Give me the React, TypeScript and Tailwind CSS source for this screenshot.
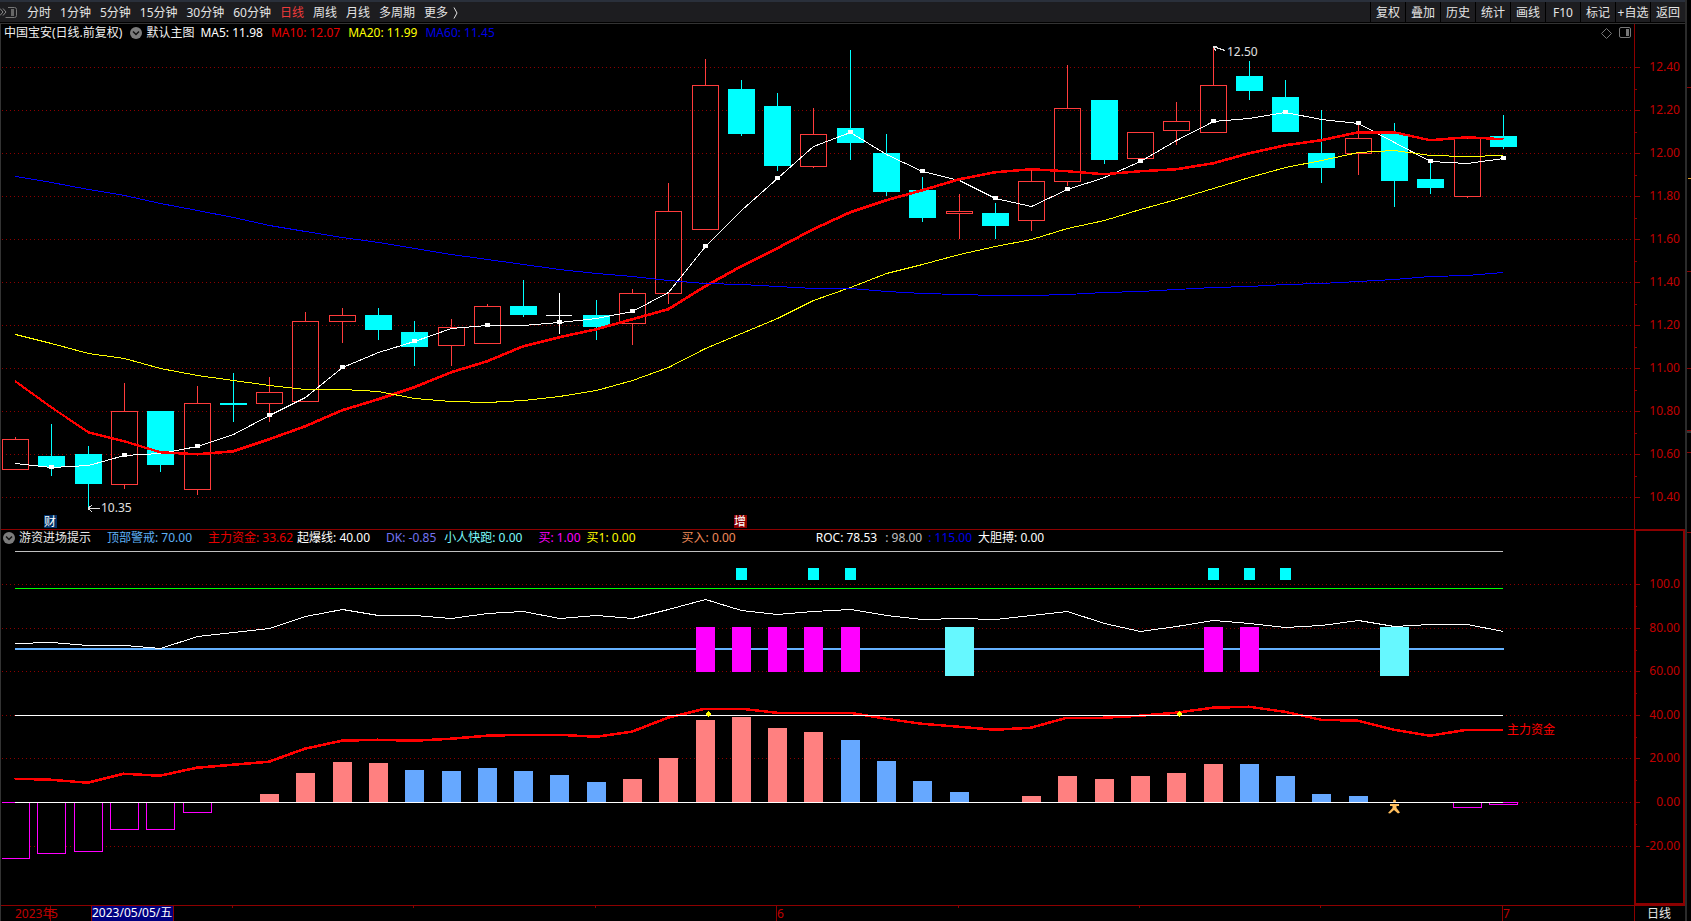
import { ReactNode } from 'react'

type Candle = [open: number, close: number, high: number, low: number]

const candles: Candle[] = [
  [10.53, 10.67, 10.68, 10.53],
  [10.59, 10.54, 10.74, 10.5],
  [10.6, 10.46, 10.64, 10.35],
  [10.46, 10.8, 10.93, 10.44],
  [10.8, 10.55, 10.8, 10.52],
  [10.44, 10.84, 10.92, 10.41],
  [10.84, 10.83, 10.98, 10.75],
  [10.84, 10.89, 10.96, 10.75],
  [10.85, 11.22, 11.26, 10.85],
  [11.22, 11.25, 11.28, 11.12],
  [11.25, 11.18, 11.28, 11.13],
  [11.17, 11.1, 11.22, 11.01],
  [11.11, 11.19, 11.23, 11.01],
  [11.12, 11.29, 11.3, 11.12],
  [11.29, 11.25, 11.41, 11.24],
  [11.25, 11.25, 11.35, 11.16],
  [11.25, 11.19, 11.32, 11.13],
  [11.21, 11.35, 11.37, 11.11],
  [11.35, 11.73, 11.86, 11.3],
  [11.65, 12.32, 12.44, 11.65],
  [12.3, 12.09, 12.34, 12.08],
  [12.22, 11.94, 12.28, 11.92],
  [11.94, 12.09, 12.21, 11.93],
  [12.12, 12.05, 12.48, 11.97],
  [12.0, 11.82, 12.09, 11.8],
  [11.83, 11.7, 11.89, 11.68],
  [11.72, 11.73, 11.81, 11.6],
  [11.72, 11.66, 11.77, 11.6],
  [11.69, 11.87, 11.93, 11.64],
  [11.87, 12.21, 12.41, 11.85],
  [12.25, 11.97, 12.25, 11.95],
  [11.98, 12.1, 12.1, 11.97],
  [12.11, 12.15, 12.24, 12.04],
  [12.1, 12.32, 12.5, 12.1],
  [12.36, 12.29, 12.43, 12.25],
  [12.26, 12.1, 12.34, 12.1],
  [12.0, 11.93, 12.2, 11.86],
  [12.0, 12.07, 12.13, 11.9],
  [12.09, 11.87, 12.14, 11.75],
  [11.88, 11.84, 11.96, 11.81],
  [11.8, 12.07, 12.08, 11.79],
  [12.08, 12.03, 12.18, 12.02],
]

// the first n-1 values come from bars that are off screen
const ma = (n: number, lead: number[]) =>
  candles.map((_, i) => {
    if (i < n - 1) return lead[i]
    return candles.slice(i - n + 1, i + 1).reduce((sum, c) => sum + c[1], 0) / n
  })

const ma5 = ma(5, [10.56, 10.54, 10.55, 10.595])
const ma10 = ma(10, [10.94, 10.82, 10.705, 10.66, 10.61, 10.6, 10.617, 10.67, 10.73])
const ma20 = ma(
  20,
  [
    11.16, 11.12, 11.07, 11.047, 11.003, 10.97, 10.944, 10.921, 10.906, 10.906, 10.895, 10.863, 10.847, 10.845, 10.854,
    10.873, 10.898, 10.947, 11.005,
  ],
)
const ma60 = [
  11.896, 11.865, 11.833, 11.805, 11.767, 11.735, 11.702, 11.665, 11.637, 11.609, 11.586, 11.561, 11.533, 11.51, 11.487,
  11.464, 11.442, 11.427, 11.409, 11.399, 11.393, 11.383, 11.375, 11.374, 11.36, 11.352, 11.347, 11.342, 11.342, 11.347,
  11.353, 11.36, 11.367, 11.377, 11.384, 11.391, 11.395, 11.408, 11.414, 11.427, 11.436, 11.45,
]

const roc = [
  73, 73.5, 72, 72, 70.8, 76, 77.8, 79.8, 85.3, 88.4, 85.6, 85.6, 84.6, 86.9, 87.4, 84.4, 86, 84.6, 88.4, 93, 88.1,
  86.1, 87.8, 88.4, 85.6, 83.8, 84.3, 83.8, 85.9, 87.4, 81.9, 78.4, 80.7, 83.5, 81.9, 80.5, 81.2, 83.3, 80.9, 81.5,
  81.5, 78.5,
]
const mainForce = [
  10.6, 10, 8.7, 13, 12.1, 15.6, 16.8, 18.5, 24.5, 28, 28.4, 28, 28.7, 30.5, 30.7, 30.7, 30, 32.3, 38.7, 42.7, 42.7,
  41, 41, 40.8, 37.9, 35.8, 34.3, 33, 34.1, 38.7, 38.4, 39.4, 40.6, 42.9, 43.8, 41.3, 37.4, 37.2, 33.2, 30.3, 33, 33,
]
const strength = [
  -25.7, -23.4, -22.5, -12.4, -12.4, -4.6, 0, 3.7, 13.3, 18.3, 17.9, 14.7, 14.2, 15.6, 14.2, 12.4, 9.2, 10.6, 20.2,
  37.6, 39, 33.9, 32.1, 28.4, 18.8, 9.6, 4.6, 0, 2.8, 11.9, 10.6, 11.9, 13.3, 17.4, 17.4, 11.9, 3.7, 2.8, 0, 0, -2.3,
  -0.9,
]

const weakBars = [11, 12, 13, 14, 15, 16, 23, 24, 25, 26, 34, 35, 36, 37]
const buySignals = [19, 20, 21, 22, 23, 33, 34]
const runSignals = [26, 38]
const topSignals = [20, 22, 23, 33, 34, 35]
const crossSignals = [19, 32]

const LEFT = 2
const PLOT = 1632

const xAt = (i: number) => Math.round(15.2 + i * 36.285)
const priceY = (p: number) => Math.round(67.3 + (12.4 - p) * 215)
const valueY = (v: number) => Math.round(802 - v * 2.18)

const toPoints = (values: number[], y: (v: number) => number, shift = 0.5) =>
  values.map((v, i) => `${xAt(i) + shift},${y(v) + shift}`).join(' ')

const priceTicks = Array.from({ length: 11 }, (_, i) => 12.4 - i * 0.2)
const valueTicks = [100, 80, 60, 40, 20, 0, -20]

const periods = ['分时', '1分钟', '5分钟', '15分钟', '30分钟', '60分钟', '日线', '周线', '月线', '多周期']
const tools = ['复权', '叠加', '历史', '统计', '画线', 'F10', '标记', '+自选', '返回']

const averages = [
  { text: 'MA5: 11.98', color: 'text-white' },
  { text: 'MA10: 12.07', color: 'text-[#e60000]' },
  { text: 'MA20: 11.99', color: 'text-[#ffff00]' },
  { text: 'MA60: 11.45', color: 'text-[#0000e6]' },
]

const readings = [
  { text: '顶部警戒: 70.00', style: 'ml-4 text-[#5fb0f5]' },
  { text: '主力资金: 33.62', style: 'ml-4 text-[#e60000]' },
  { text: '起爆线: 40.00', style: 'ml-1 text-white' },
  { text: 'DK: -0.85', style: 'ml-4 text-[#7474f0]' },
  { text: '小人快跑: 0.00', style: 'ml-2 text-[#7dfcfc]' },
  { text: '买: 1.00', style: 'ml-4 text-[#ff00ff]' },
  { text: '买1: 0.00', style: 'ml-1.5 text-[#ffff00]' },
  { text: '买入: 0.00', style: 'ml-[46px] text-[#f08c5a]' },
  { text: 'ROC: 78.53', style: 'ml-20 text-white' },
  { text: ': 98.00', style: 'ml-2 text-[#c0c0c0]' },
  { text: ': 115.00', style: 'ml-1.5 text-[#0000e6]' },
  { text: '大胆搏: 0.00', style: 'ml-1.5 text-white' },
]

const GridLines = ({ ys }: { ys: number[] }) => (
  <>
    {ys.map((y) => (
      <line key={y} x1={2} x2={1634} y1={y + 0.5} y2={y + 0.5} stroke="#8c0000" strokeDasharray="1 3" />
    ))}
  </>
)

const AxisTicks = ({ ys }: { ys: number[] }) => (
  <g stroke="#8c0000" shapeRendering="crispEdges">
    {ys.map((y) => (
      <line key={y} x1={1635} x2={1640} y1={y + 0.5} y2={y + 0.5} />
    ))}
    {ys.slice(1).map((y, i) => (
      <line key={y} x1={1635} x2={1637} y1={Math.round((y + ys[i]) / 2) + 0.5} y2={Math.round((y + ys[i]) / 2) + 0.5} />
    ))}
  </g>
)

// text that lies over a plot, its x follows the plot's width
const Mark = ({ x, className, children }: { x: number; className: string; children: ReactNode }) => (
  <span
    className={`absolute whitespace-nowrap leading-none ${className}`}
    style={{ left: `${((x - LEFT) / PLOT) * 100}%` }}
  >
    {children}
  </span>
)

const Toggle = ({ label }: { label: string }) => (
  <button type="button" aria-label={label} className="shrink-0">
    <svg width="12" height="12" viewBox="0 0 12 12" className="block">
      <circle cx="6" cy="6" r="6" fill="#7c7c7c" />
      <path d="M3 4.5 6 7.5 9 4.5" fill="none" stroke="#111" strokeWidth="1.5" />
    </svg>
  </button>
)

const Toolbar = () => (
  <header className="flex h-[22px] items-stretch justify-between border-t-2 border-[#2a303b] bg-[#1d1d20] text-[#e4e4e4]">
    <div className="flex items-center pt-0.5">
      <button type="button" aria-label="侧栏" className="mr-2.5">
        <svg width="17" height="12" viewBox="0 0 17 12" className="block" fill="none" stroke="#8a8a8a">
          <path d="M0 1.5 3 5 0 8.5M3 1.5 6 5 3 8.5" />
          <path d="M8 .5H14.5Q16.5.5 16.5 2.5V8.5Q16.5 10.5 14.5 10.5H5.5" stroke="#777" />
          <path d="M12.5 2V9" strokeWidth="3" stroke="#666" />
        </svg>
      </button>
      <nav className="flex items-center gap-[9px]">
        {periods.map((period) => (
          <button key={period} type="button" className={period === '日线' ? 'text-[#f03a3a]' : ''}>
            {period}
          </button>
        ))}
        <button type="button" className="flex items-center gap-[5px]">
          更多
          <svg width="5" height="12" viewBox="0 0 5 12" fill="none" stroke="#e4e4e4">
            <path d="M1 .5 4 6 1 11.5" />
          </svg>
        </button>
      </nav>
    </div>
    <div className="flex">
      {tools.map((tool) => (
        <button key={tool} type="button" className="w-[35px] whitespace-nowrap border-l border-black pt-0.5 text-center">
          {tool}
        </button>
      ))}
    </div>
  </header>
)

const CandleShape = ({ index, candle }: { index: number; candle: Candle }) => {
  const [open, close, high, low] = candle
  const x = xAt(index)
  const top = priceY(Math.max(open, close))
  const bottom = priceY(Math.min(open, close))

  if (open === close) {
    return <path d={`M${x - 13} ${top + 0.5}H${x + 13}M${x + 0.5} ${priceY(high)}V${priceY(low)}`} stroke="#fff" />
  }
  if (close < open) {
    return (
      <g>
        <path d={`M${x + 0.5} ${priceY(high)}V${priceY(low)}`} stroke="#00ffff" />
        <rect x={x - 13} y={top} width={27} height={Math.max(bottom - top, 2)} fill="#00ffff" />
      </g>
    )
  }
  return (
    <g stroke="#ff3c3c" fill="none">
      <path d={`M${x + 0.5} ${priceY(high)}V${top}M${x + 0.5} ${bottom}V${priceY(low)}`} />
      <rect x={x - 12.5} y={top + 0.5} width={26} height={bottom - top} />
    </g>
  )
}

const PricePanel = () => (
  <section className="flex">
    <div className="min-w-0 flex-1 pl-px">
      <div className="flex h-[18px] items-center justify-between pl-0.5 pr-[3px]">
        <div className="flex items-center text-[#f0f0f0]">
          <span className="mr-2">中国宝安(日线.前复权)</span>
          <Toggle label="主图设置" />
          <span className="ml-1 mr-1.5">默认主图</span>
          <div className="flex gap-2">
            {averages.map((item) => (
              <span key={item.text} className={item.color}>
                {item.text}
              </span>
            ))}
          </div>
        </div>
        <div className="flex items-center gap-[7px]">
          <button type="button" aria-label="标记点">
            <svg width="11" height="11" viewBox="0 0 11 11" className="block" fill="none" stroke="#777">
              <path d="M5.5.5 10.5 5.5 5.5 10.5 .5 5.5Z" />
            </svg>
          </button>
          <button type="button" aria-label="右侧栏">
            <svg width="12" height="12" viewBox="0 0 12 12" className="block">
              <rect x=".5" y=".5" width="11" height="10" rx="1.5" fill="none" stroke="#777" />
              <rect x="7" y="2" width="3" height="7" fill="#777" />
            </svg>
          </button>
        </div>
      </div>
      <div className="relative">
        <svg
          viewBox="2 42 1632 487"
          preserveAspectRatio="none"
          shapeRendering="crispEdges"
          className="block h-[487px] w-full"
        >
          <GridLines ys={priceTicks.map(priceY)} />
          {candles.map((candle, i) => (
            <CandleShape key={i} index={i} candle={candle} />
          ))}
          <g fill="none">
            <polyline points={toPoints(ma5, priceY)} stroke="#fff" />
            <polyline points={toPoints(ma10, priceY, 0)} stroke="#ff0000" strokeWidth={2} />
            <polyline points={toPoints(ma10, priceY, 0.5)} stroke="#ff0000" strokeWidth={2} />
            <polyline points={toPoints(ma20, priceY)} stroke="#ffff00" />
            <polyline points={toPoints(ma60, priceY)} stroke="#0000ff" />
          </g>
          {ma5.map(
            (v, i) => i % 2 === 1 && <rect key={i} x={xAt(i) - 2} y={priceY(v) - 2} width={5} height={4} fill="#fff" />,
          )}
          <path d="M88 508.5H100M88 508.5 92 505M88 508.5 92 512" stroke="#e0e0e0" fill="none" />
          <path d="M1213 46.5 1225 50.5M1213 46.5H1217M1213 46.5 1216 51" stroke="#e0e0e0" fill="none" />
        </svg>
        <Mark x={101} className="top-[460px] text-[#e0e0e0]">
          10.35
        </Mark>
        <Mark x={1227} className="top-[4px] text-[#e0e0e0]">
          12.50
        </Mark>
        <Mark x={44} className="top-[473px] h-[13px] w-[13px] bg-[#003068] pt-px text-white">
          财
        </Mark>
        <Mark x={734} className="top-[473px] h-[13px] w-[13px] bg-[#8c0000] pt-px text-white">
          增
        </Mark>
      </div>
    </div>
    <svg width="51" height="505" viewBox="1634 24 51 505" className="block shrink-0">
      <path d="M1634.5 24V529" stroke="#8c0000" />
      <AxisTicks ys={priceTicks.map(priceY)} />
      {priceTicks.map((tick) => (
        <text key={tick} x={1680} y={priceY(tick) + 4} textAnchor="end" fontSize={12} fill="#c00000">
          {tick.toFixed(2)}
        </text>
      ))}
    </svg>
  </section>
)

const StrengthBar = ({ index, value }: { index: number; value: number }) => {
  const x = xAt(index)
  const y = valueY(value)
  if (value === 0) return null
  if (value < 0) {
    return <path d={`M${x - 13.5} 802.5V${y + 0.5}H${x + 14.5}V802.5Z`} fill="#000" stroke="#ff00ff" />
  }
  return <rect x={x - 9} y={y} width={19} height={802 - y} fill={weakBars.includes(index) ? '#66a8ff' : '#ff8080'} />
}

const IndicatorPanel = () => (
  <section className="flex">
    <div className="min-w-0 flex-1 border-t border-[#8c0000] pl-px">
      <div className="flex h-4 items-center whitespace-nowrap pl-px">
        <Toggle label="指标设置" />
        <span className="ml-1 text-[#e8e8e8]">游资进场提示</span>
        {readings.map((item) => (
          <span key={item.text} className={item.style}>
            {item.text}
          </span>
        ))}
      </div>
      <div className="relative">
        <svg
          viewBox="2 546 1632 359"
          preserveAspectRatio="none"
          shapeRendering="crispEdges"
          className="block h-[359px] w-full"
        >
          <GridLines ys={valueTicks.map(valueY)} />
          <path d="M15 551.5H1503" stroke="#c0c0c0" />
          <path d="M15 588.5H1503" stroke="#00ff00" />
          <path d="M15 649H1504" stroke="#66b2ff" strokeWidth={2} />
          {topSignals.map((i) => (
            <rect key={i} x={xAt(i) - 5} y={568} width={11} height={12} fill="#00ffff" />
          ))}
          <polyline points={toPoints(roc, valueY)} fill="none" stroke="#fff" />
          {buySignals.map((i) => (
            <rect key={i} x={xAt(i) - 9} y={627} width={19} height={45} fill="#ff00ff" />
          ))}
          {runSignals.map((i) => (
            <rect key={i} x={xAt(i) - 14} y={627} width={29} height={49} fill="#66f8ff" />
          ))}
          {strength.map((value, i) => (
            <StrengthBar key={i} index={i} value={value} />
          ))}
          <g fill="none">
            <polyline points={toPoints(mainForce, valueY, 0)} stroke="#ff0000" strokeWidth={2} />
            <polyline points={toPoints(mainForce, valueY, -0.5)} stroke="#ff0000" strokeWidth={2} />
            <path d="M15 715.5H1503M15 802.5H1503" stroke="#fff" />
          </g>
          {crossSignals.map((i) => (
            <path key={i} d={`M${xAt(i) + 3.5} 711l3 3-3 3-3-3z`} fill="#ffff00" />
          ))}
          <g fill="#ffbe5c" shapeRendering="auto">
            <circle cx="1394.5" cy="801" r="1.5" />
            <path d="M1390 804H1399V806H1396.5V808L1400 812.5 1398 813.5 1394 810 1390 813.5 1388 813 1392.5 808V806H1390Z" />
          </g>
        </svg>
        <Mark x={1507} className="top-[178px] text-[#ff0000]">
          主力资金
        </Mark>
      </div>
    </div>
    <svg width="51" height="376" viewBox="1634 529 51 376" className="block shrink-0">
      <rect x={1635} y={530} width={49} height={374} fill="none" stroke="#8c0000" strokeWidth={2} />
      <AxisTicks ys={valueTicks.map(valueY)} />
      {valueTicks.map((tick) => (
        <text key={tick} x={1680} y={valueY(tick) + 4} textAnchor="end" fontSize={12} fill="#c00000">
          {tick === 100 ? '100.0' : tick.toFixed(2)}
        </text>
      ))}
    </svg>
  </section>
)

const TimeAxis = () => (
  <footer className="flex h-4 border-t border-[#8c0000]">
    <div className="min-w-0 flex-1 pl-px">
      <div className="relative">
        <svg
          viewBox="2 906 1632 15"
          preserveAspectRatio="none"
          shapeRendering="crispEdges"
          className="block h-[15px] w-full"
          stroke="#8c0000"
        >
          {[1, 21, 41].map((i) => (
            <path key={i} d={`M${xAt(i) - 0.5} 906V921`} />
          ))}
          {[6, 11, 16, 26, 31, 36].map((i) => (
            <path key={i} d={`M${xAt(i) - 0.5} 906V908`} />
          ))}
        </svg>
        <Mark x={15} className="top-[2px] text-[#c00000]">
          2023年
        </Mark>
        <Mark x={51} className="top-[2px] text-[#c00000]">
          5
        </Mark>
        <Mark x={91} className="top-0 h-[15px] border-x border-[#8c0000] bg-[#000080] pr-px pt-px text-white">
          2023/05/05/五
        </Mark>
        <Mark x={777} className="top-[2px] text-[#c00000]">
          6
        </Mark>
        <Mark x={1503} className="top-[2px] text-[#c00000]">
          7
        </Mark>
      </div>
    </div>
    <div className="w-[51px] border-l border-[#8c0000] pl-3 leading-[15px] text-[#e8e8e8]">日线</div>
  </footer>
)

const SideStrip = () => (
  <aside className="w-[6px] shrink-0 border-l-2 border-[#2b2b2b]">
    <svg width="4" height="921" viewBox="0 0 4 921" className="block" shapeRendering="crispEdges">
      {[87, 271, 368, 430, 452, 532].map((y) => (
        <path key={y} d={`M0 ${y + 0.5}H4`} stroke="#8c0000" />
      ))}
      <path d="M1 178.5H4" stroke="#e09a20" />
      <path d="M0 432H4" stroke="#333" strokeWidth={2} />
    </svg>
  </aside>
)

const App = () => (
  <div className="flex min-h-screen bg-black font-['Noto_Sans','Noto_Sans_CJK_SC',sans-serif] text-[12px] leading-4">
    <div className="min-w-0 flex-1">
      <Toolbar />
      <main className="mt-px border-l border-t border-[#333]">
        <PricePanel />
        <IndicatorPanel />
        <TimeAxis />
      </main>
    </div>
    <SideStrip />
  </div>
)

export default App
